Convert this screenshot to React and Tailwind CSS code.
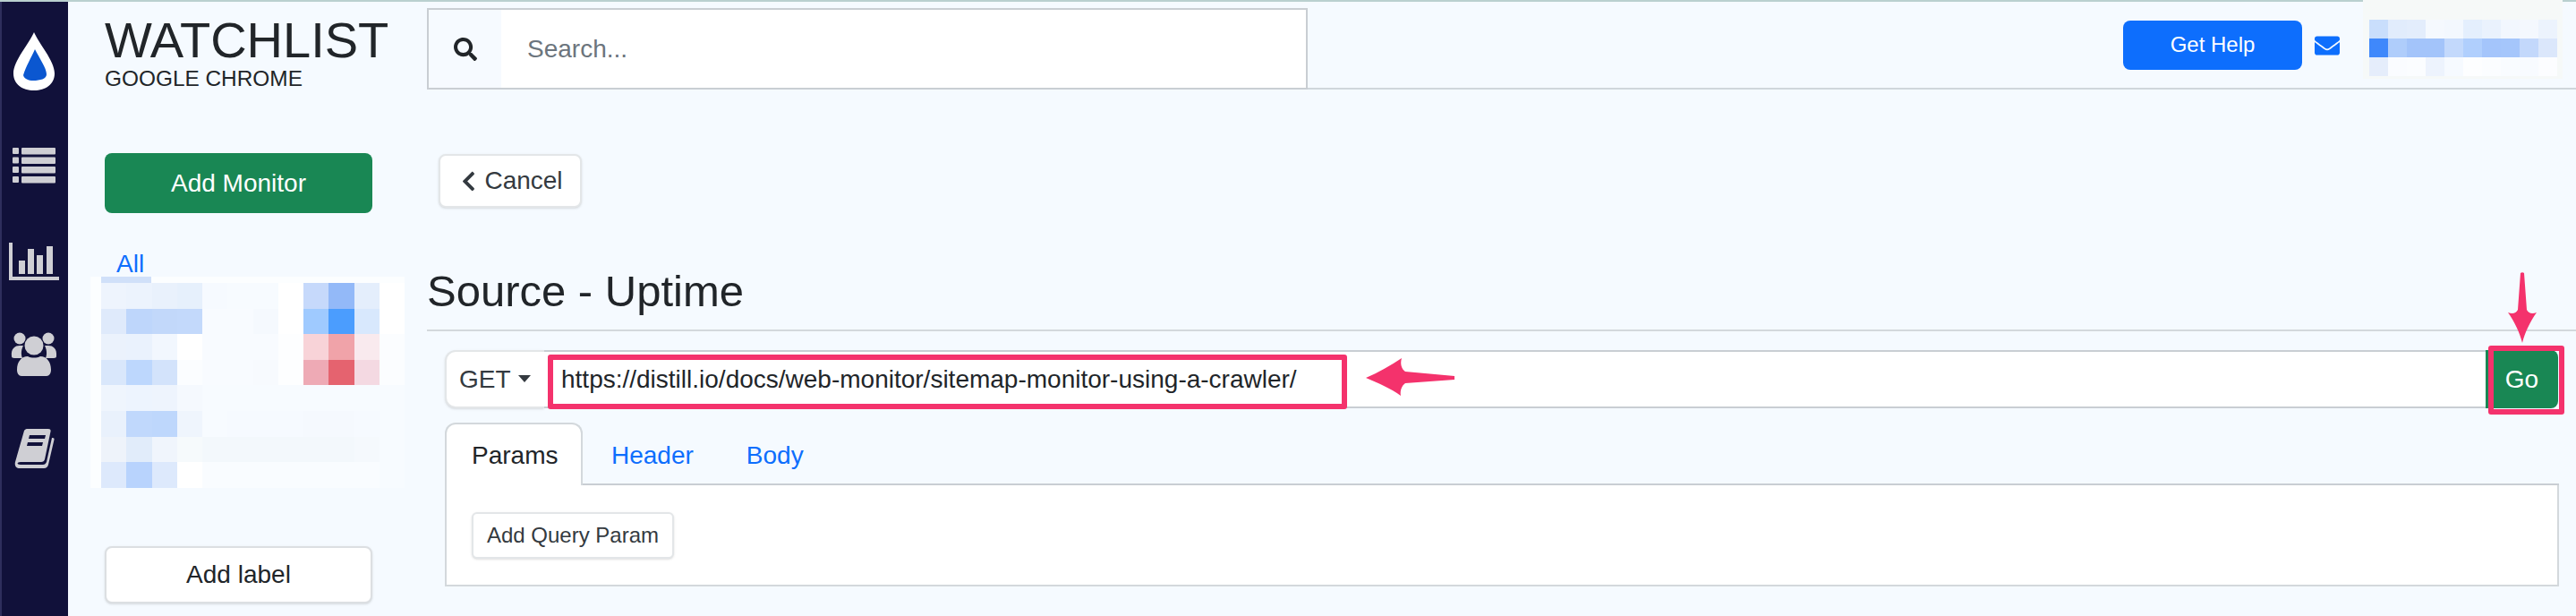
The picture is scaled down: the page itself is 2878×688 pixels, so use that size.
import { FaSearch, FaChevronLeft, FaEnvelope } from "react-icons/fa";

const SIDE_BLUR = [
  ["#eef4fd", "#ecf3fd", "#e9f1fc", "#e6f0fc", "#f6faff", "#f7fbff", "#f7fbff", "#ffffff", "#c6d9fb", "#93b9f8", "#e4eefc", "#ffffff"],
  ["#dfeafb", "#bed6fb", "#c2d8fa", "#c3d9fb", "#f8fbff", "#f8fbff", "#f5f9fe", "#ffffff", "#9fcaff", "#4b9dfe", "#d8e8fd", "#ffffff"],
  ["#ebf2fc", "#eaf2fd", "#f2f7fe", "#ffffff", "#f8fbff", "#f8fbff", "#f8fbff", "#fdfeff", "#f8d3d8", "#f0a3a9", "#f9eaee", "#fbfdff"],
  ["#d9e7fb", "#bdd7fd", "#d3e3fb", "#fbfdff", "#f8fbff", "#f8fbff", "#f7fafe", "#fdfeff", "#eeaab5", "#e5636f", "#f4d9e2", "#fbfdff"],
  ["#eff5fd", "#edf4fe", "#eef4fd", "#f5f9fe", "#f7fbff", "#f7fbff", "#f7fbff", "#f7fbff", "#f7fbff", "#f7fbff", "#f7fbff", "#f7fbff"],
  ["#e9f1fc", "#c0d8fc", "#bed7fc", "#eff5fd", "#f7fbff", "#f6faff", "#f6faff", "#f6faff", "#f5f9fe", "#f5f9fe", "#f6faff", "#f7fbff"],
  ["#eef3fa", "#e1ecfa", "#f0f5fc", "#f6fafc", "#f3f8fc", "#f3f8fc", "#f3f8fc", "#f3f8fc", "#f3f8fc", "#f3f8fc", "#f5f9fd", "#f7fbff"],
  ["#dde9fc", "#b8d3fd", "#dde9fc", "#ffffff", "#f9fcff", "#f9fcff", "#f9fcff", "#f9fcff", "#f9fcff", "#f9fcff", "#f9fcff", "#f7fbff"],
];

const USER_BLUR = [
  ["#c9defc", "#e1ecfc", "#e3edfc", "#f5f9fe", "#f3f8fe", "#e4effd", "#eaf2fd", "#f2f7fe", "#f4f8fe", "#ecf3fd"],
  ["#3f88fb", "#afcdfb", "#a3c4fa", "#a3c4fa", "#c3d9fc", "#b0cffd", "#a4c5fb", "#a5c6fb", "#c3d8fb", "#dbe7fb"],
  ["#e5edfb", "#fafcff", "#fbfdff", "#edf3fd", "#f6faff", "#fdfeff", "#fbfdff", "#f9fcff", "#f8fbff", "#fcfdff"],
];

function Pixels({ rows, className }) {
  return (
    <div className={className}>
      {rows.flat().map((color, i) => (
        <div key={i} style={{ backgroundColor: color }} />
      ))}
    </div>
  );
}

function Sidebar() {
  return (
    <div className="w-[76px] shrink-0 bg-[#11113a] border-l-2 border-[#2e2e5c] flex flex-col">
      {/* drop logo */}
      <svg className="mt-[34px] ml-[11px]" width="50" height="66" viewBox="0 0 50 66">
        <path d="M25 0C30 12 48 32 48 46C48 58 38 65 25 65C12 65 2 58 2 46C2 32 20 12 25 0Z" fill="#fff" />
        <path d="M26 19C31 29 39 40 39 47C39 52 32 54 24 54C19 54 14 52 13 48C16 38 22 28 26 19Z" fill="#0b57d0" />
      </svg>
      {/* list */}
      <svg className="mt-[63px] ml-[12px]" width="48" height="40" viewBox="0 0 48 40" fill="#cfcfd4">
        <rect x="0" y="0" width="7" height="7" rx="1" />
        <rect x="10" y="0" width="38" height="7.5" rx="1" />
        <rect x="0" y="10.5" width="7" height="7" rx="1" />
        <rect x="10" y="10.5" width="38" height="7.5" rx="1" />
        <rect x="0" y="21" width="7" height="7" rx="1" />
        <rect x="10" y="21" width="38" height="7.5" rx="1" />
        <rect x="0" y="32" width="7" height="7" rx="1" />
        <rect x="10" y="32" width="38" height="7.5" rx="1" />
      </svg>
      {/* chart */}
      <svg className="mt-[66px] ml-[8px]" width="56" height="42" viewBox="0 0 56 42" fill="#cfcfd4">
        <rect x="0" y="0" width="4" height="42" />
        <rect x="0" y="38" width="56" height="4" />
        <rect x="11" y="20" width="7" height="15" />
        <rect x="21" y="7" width="7" height="28" />
        <rect x="31" y="14" width="7" height="21" />
        <rect x="42" y="4" width="7" height="31" />
      </svg>
      {/* users */}
      <svg className="mt-[58px] ml-[10px]" width="52" height="50" viewBox="0 0 52 50" fill="#cfcfd4">
        <circle cx="10" cy="7" r="6.5" />
        <circle cx="42" cy="7" r="6.5" />
        <path d="M1 27C0 18 5 15 10 15L14 15C12 19 11 24 13 29L4 29C2 29 1 28 1 27Z" />
        <path d="M51 27C52 18 47 15 42 15L38 15C40 19 41 24 39 29L48 29C50 29 51 28 51 27Z" />
        <circle cx="26" cy="15" r="10.5" />
        <path d="M7 42C7 33 12 27 19 27C23 29 29 29 33 27C40 27 45 33 45 42C45 46 43 49 40 49L12 49C9 49 7 46 7 42Z" />
      </svg>
      {/* book */}
      <svg className="mt-[58px] ml-[14px]" width="46" height="44" viewBox="0 0 46 44">
        <path d="M11 2C12 0.5 13 0 15 0L38 0C40 0 41 1 40.5 3L34 34C33.5 36 32 37 30 37L7 37C3 37 2 40 7 40L32 40C34 40 35 39 36 37L42 10C43 10 45 10 44.5 12L38 40C37.5 42 36 44 33 44L6 44C2 44 0 41 1 37Z" fill="#cfcfd4" />
        <path d="M17 7L35 7L34 11L16 11Z" fill="#11113a" />
        <path d="M15 15L32 15L31 19L14 19Z" fill="#11113a" />
      </svg>
    </div>
  );
}

function Header() {
  return (
    <div className="flex h-[98px]">
      <div className="w-[401px] shrink-0 pl-[41px] text-[#212529]">
        <h1 className="text-[56px] leading-[56px] mt-[15px]">WATCHLIST</h1>
        <div className="text-[24.4px] leading-[28px] mt-[1px]">GOOGLE CHROME</div>
      </div>
      <div className="w-[984px] shrink-0 mt-[7px] h-[91px] border-2 border-[#c9ced3] flex bg-white">
        <div className="w-[81px] bg-[#f6faff] flex items-center justify-center text-[#212529]">
          <FaSearch size={26} />
        </div>
        <div className="pl-[29px] flex items-center text-[28px] text-[#6c757d]">Search...</div>
      </div>
      <div className="flex-1 border-b-2 border-[#cfd6db] flex justify-end pr-[15px]">
        <button className="mt-[21px] w-[200px] h-[55px] rounded-lg bg-[#0d6efd] text-white text-[24px] pb-[2px]">Get Help</button>
        <FaEnvelope className="mt-[35px] ml-[14px] text-[#0d6efd]" size={28} />
        <div className="relative z-10 -mt-[2px] ml-[26px] w-[223px] h-[88px] bg-[#f6f9f8]">
          <Pixels
            rows={USER_BLUR}
            className="mt-[22px] ml-[7px] w-[210px] grid grid-cols-[repeat(10,21px)] grid-rows-[repeat(3,21px)]"
          />
        </div>
      </div>
    </div>
  );
}

function LeftColumn() {
  return (
    <div className="w-[401px] shrink-0 pl-[25px]">
      <button className="block mt-[71px] ml-[16px] w-[299px] h-[67px] rounded-lg bg-[#198754] text-white text-[28px]">
        Add Monitor
      </button>
      <a className="block ml-[29px] mt-[42px] text-[28px] leading-[30px] text-[#0d6efd]">All</a>
      <div className="relative w-[351px] mt-[-1px] h-[236px] bg-white/70 pl-[12px] pt-[7px]">
        <div className="absolute left-[12px] top-0 w-[56px] h-[7px] bg-[#d0e0f9]" />
        <Pixels
          rows={SIDE_BLUR}
          className="w-[339px] grid grid-cols-[repeat(12,28.25px)] grid-rows-[repeat(8,28.6px)]"
        />
      </div>
      <button className="block mt-[65px] ml-[16px] w-[299px] h-[64px] rounded-lg bg-white border-2 border-[#dcdfe2] shadow-sm text-[#212529] text-[28px]">
        Add label
      </button>
    </div>
  );
}

function RequestRow() {
  return (
    <div className="relative flex h-[65px] w-[2361px] ml-[20px] mt-[21px]">
      <button className="w-[111px] shrink-0 bg-white rounded-l-xl border-2 border-r-0 border-[#e3e6e8] shadow-sm flex items-center pl-[14px] text-[28px] text-[#343a40]">
        GET
        <span className="ml-[8px] mt-[-2px] border-x-[7px] border-x-transparent border-t-[8px] border-t-[#343a40]" />
      </button>
      <div className="flex-1 bg-white border-y-2 border-[#c9ced3] flex items-center pl-[19px] text-[28px] text-[#212529]">
        https://distill.io/docs/web-monitor/sitemap-monitor-using-a-crawler/
      </div>
      <button className="w-[81px] shrink-0 bg-[#198754] rounded-r-lg text-white text-[28px]">Go</button>

      {/* annotations */}
      <div className="absolute left-[115px] top-[5px] w-[893px] h-[61px] border-[6px] border-[#f4326c] rounded-[3px]" />
      <div className="absolute left-[2283px] top-[-5px] w-[85px] h-[77px] border-[6px] border-[#f4326c] rounded-[3px]" />
      <svg className="absolute left-[1029px] top-[8px]" width="100" height="44" viewBox="0 0 100 44">
        <path d="M0 23C14 17 28 9 40 1C38 8 40 13 44 16L99 21L99 25L44 29C40 32 38 37 39 43C28 35 14 29 0 23Z" fill="#f4326c" />
      </svg>
      <svg className="absolute left-[2304px] top-[-87px]" width="34" height="80" viewBox="0 0 34 80">
        <path d="M15 1C16 0 18 0 19 1L22 42C24 46 28 47 33 45C26 55 20 67 17 79C14 67 8 55 1 45C6 47 10 46 12 42Z" fill="#f4326c" />
      </svg>
    </div>
  );
}

function Tabs() {
  return (
    <div className="ml-[20px] w-[2362px]">
      <div className="flex items-end mt-[16px] h-[70px] border-b-2 border-[#c9ced3] text-[28px]">
        <div className="w-[154px] h-[70px] -mb-[2px] bg-white border-2 border-b-0 border-[#d3d8dc] rounded-t-xl pl-[28px] pt-[14px] text-[#212529]">
          Params
        </div>
        <a className="ml-[32px] mb-[10px] text-[#0d6efd]">Header</a>
        <a className="ml-[59px] mb-[10px] text-[#0d6efd]">Body</a>
      </div>
      <div className="h-[113px] bg-white border-x-2 border-b-2 border-[#d3d8dc] pl-[28px] pt-[30px]">
        <button className="w-[226px] h-[52px] bg-white rounded-md border-2 border-[#e3e6e8] shadow-sm text-[24px] text-[#343a40]">
          Add Query Param
        </button>
      </div>
    </div>
  );
}

export default function App() {
  return (
    <div className="h-[688px] overflow-hidden bg-[#f5faff] font-['Liberation_Sans',Arial,sans-serif] flex flex-col">
      <div className="h-[2px] shrink-0 bg-[#b9d0cf]" />
      <div className="flex flex-1 min-h-0">
        <Sidebar />
        <div className="flex-1 min-w-0">
          <Header />
          <div className="flex">
            <LeftColumn />
            <div className="flex-1 min-w-0">
              <button className="mt-[72px] ml-[13px] w-[160px] h-[60px] rounded-lg bg-white border-2 border-[#e3e6e8] shadow-sm flex items-center justify-center gap-[5px] text-[28px] text-[#343a40]">
                <FaChevronLeft size={25} />
                Cancel
              </button>
              <div className="mt-[65px] h-[73px] border-b-2 border-[#d3d8dc]">
                <h2 className="text-[49px] leading-[56px] text-[#212529]">Source - Uptime</h2>
              </div>
              <RequestRow />
              <Tabs />
            </div>
          </div>
        </div>
      </div>
    </div>
  );
}
